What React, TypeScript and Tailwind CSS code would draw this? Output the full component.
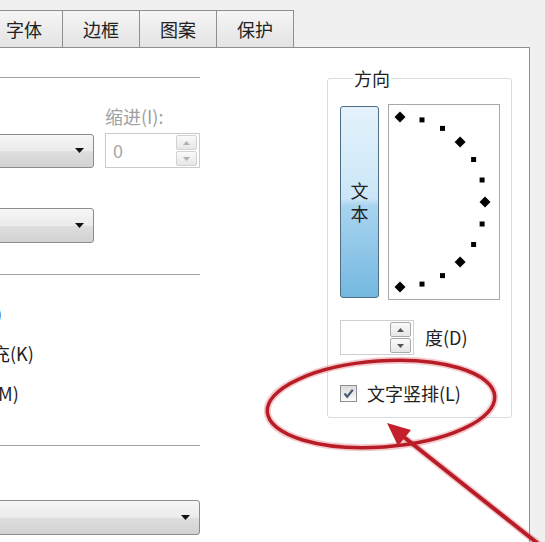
import React from 'react'

function DownArrow({ color = '#111' }: { color?: string }) {
  return (
    <svg width="9" height="5" viewBox="0 0 9 5">
      <polygon points="0,0 9,0 4.5,5" fill={color} />
    </svg>
  )
}

function Combo({ className }: { className: string }) {
  return (
    <div
      className={`flex items-center justify-end pr-[9px] rounded-[3px] border border-[#8c8c8c] bg-[linear-gradient(to_bottom,#f6f6f6_0%,#ebebeb_50%,#dedede_52%,#d2d2d2_100%)] ${className}`}
    >
      <DownArrow />
    </div>
  )
}

function SpinButtons({ disabled }: { disabled?: boolean }) {
  const border = disabled ? 'border-[#d2d2d2]' : 'border-[#a9a9a9]'
  const arrow = disabled ? '#b0b0b0' : '#555'
  return (
    <div className="flex h-[31px] w-[21px] flex-col gap-px">
      <div className={`flex flex-1 items-center justify-center rounded-[2px] border ${border} bg-[linear-gradient(to_bottom,#fafafa,#e6e6e6)]`}>
        <svg width="7" height="4" viewBox="0 0 7 4">
          <polygon points="0,4 7,4 3.5,0" fill={arrow} />
        </svg>
      </div>
      <div className={`flex flex-1 items-center justify-center rounded-[2px] border ${border} bg-[linear-gradient(to_bottom,#fafafa,#e6e6e6)]`}>
        <svg width="7" height="4" viewBox="0 0 7 4">
          <polygon points="0,0 7,0 3.5,4" fill={arrow} />
        </svg>
      </div>
    </div>
  )
}

function CheckBox({ checked }: { checked?: boolean }) {
  return (
    <div className="flex h-[17px] w-[17px] shrink-0 items-center justify-center border border-[#8e8f8f] bg-[linear-gradient(to_bottom,#dcdcdc,#fbfbfb)]">
      {checked && (
        <svg width="13" height="13" viewBox="0 0 13 13">
          <path d="M2.5 6.5 L5.2 9.8 L10.8 2.8" fill="none" stroke="#4b5d7c" strokeWidth="2.2" />
        </svg>
      )}
    </div>
  )
}

function Dial() {
  const cx = 11
  const cy = 97
  const r = 85
  const marks = []
  for (let a = 90; a >= -90; a -= 15) {
    const rad = (a * Math.PI) / 180
    const x = cx + r * Math.cos(rad)
    const y = cy - r * Math.sin(rad)
    if (a % 45 === 0) {
      marks.push(
        <polygon key={a} points={`${x},${y - 5.5} ${x + 5.5},${y} ${x},${y + 5.5} ${x - 5.5},${y}`} fill="#000" />
      )
    } else {
      marks.push(<rect key={a} x={x - 2.5} y={y - 2.5} width="5" height="5" fill="#000" />)
    }
  }
  return (
    <div className="h-[196px] w-[112px] border border-[#a8a8a8] bg-white">
      <svg width="110" height="194" viewBox="0 0 110 194">
        {marks}
      </svg>
    </div>
  )
}

const tabs = ['字体', '边框', '图案', '保护']

export default function App() {
  return (
    <div className="relative h-[542px] w-[545px] overflow-hidden bg-[#f0f0f0] font-['Noto_Sans_CJK_SC','Noto_Sans',sans-serif] text-[18px] text-[#222]">
      {/* 选项卡 */}
      <div className="flex h-[47px] items-end">
        {tabs.map((t, i) => (
          <div
            key={t}
            className={`flex h-[37px] w-[78px] items-center justify-center border-x border-t border-[#8e8f8f] bg-[linear-gradient(to_bottom,#f5f5f5,#e3e3e3)] leading-none ${i === 0 ? '-ml-[15px]' : '-ml-px'}`}
          >
            {t}
          </div>
        ))}
      </div>

      {/* 对齐 面板 */}
      <div className="flex h-[495px] w-[530px] border-r border-t border-[#8e8f8f] bg-white">
        <div className="-ml-[140px] flex w-[340px] shrink-0 flex-col">
          <div className="mt-[29px] h-px bg-[#a2a2a2]" />
          <div className="mt-[26px] h-[24px] pl-[245px] leading-[24px] text-[#a0a0a0]">缩进(I):</div>
          <div className="mt-[5px] flex items-center">
            <Combo className="ml-[10px] h-[34px] w-[224px]" />
            <div className="ml-[11px] flex h-[35px] w-[95px] items-center justify-between border border-[#cacaca] pl-[7px] pr-[2px] text-[#a8a8a8]">
              <span>0</span>
              <SpinButtons disabled />
            </div>
          </div>
          <Combo className="ml-[10px] mt-[40px] h-[35px] w-[224px]" />
          <div className="mt-[31px] h-px bg-[#a2a2a2]" />
          <div className="mt-[18px] flex flex-col whitespace-nowrap">
            <div className="flex h-[40px] items-center gap-[7px] pl-[18px]">
              <CheckBox />
              <span>自动换行(W)</span>
            </div>
            <div className="flex h-[40px] items-center gap-[7px] pl-[18px]">
              <CheckBox />
              <span>缩小字体填充(K)</span>
            </div>
            <div className="flex h-[40px] items-center gap-[7px] pl-[18px]">
              <CheckBox />
              <span>合并单元格(M)</span>
            </div>
          </div>
          <div className="mt-[32px] h-px bg-[#a2a2a2]" />
          <Combo className="ml-[10px] mt-[54px] h-[35px] w-[330px]" />
        </div>

        {/* 方向 */}
        <fieldset className="ml-[127px] mt-[18px] w-[185px] self-start rounded-[3px] border border-[#d6dde2] pb-[12px] pl-[12px]">
          <legend className="ml-[13px] px-[1px] leading-[24px]">方向</legend>
          <div className="mt-[14px] flex gap-[9px]">
            <div className="mt-[2px] flex h-[192px] w-[39px] flex-col items-center justify-center rounded-[3px] border border-[#4f6e84] bg-[linear-gradient(to_bottom,#e4f2fb_0%,#cbe6f7_48%,#a9d4ef_52%,#74b8e0_100%)] leading-[23px]">
              <span>文</span>
              <span>本</span>
            </div>
            <Dial />
          </div>
          <div className="mt-[20px] flex items-center">
            <div className="flex h-[35px] w-[74px] items-center justify-end border border-[#cfcfcf] pr-[2px]">
              <SpinButtons />
            </div>
            <span className="ml-[11px]">度(D)</span>
          </div>
          <div className="mt-[26px] flex h-[24px] items-center gap-[10px]">
            <CheckBox checked />
            <span>文字竖排(L)</span>
          </div>
        </fieldset>
      </div>

      {/* 红色标注 */}
      <svg className="pointer-events-none absolute inset-0" width="545" height="542" viewBox="0 0 545 542">
        <g stroke="#e06a70" strokeOpacity="0.35" fill="none" strokeWidth="7">
          <ellipse cx="381" cy="404" rx="114" ry="43" transform="rotate(-4 381 404)" />
          <line x1="541" y1="546" x2="400" y2="434" />
        </g>
        <ellipse cx="381" cy="404" rx="114" ry="43" transform="rotate(-4 381 404)" fill="none" stroke="#b81d27" strokeWidth="3.5" />
        <line x1="541" y1="546" x2="400" y2="434" stroke="#b81d27" strokeWidth="4" />
        <polygon points="387,423 411,430 398,446" fill="#c3202b" />
      </svg>
    </div>
  )
}
